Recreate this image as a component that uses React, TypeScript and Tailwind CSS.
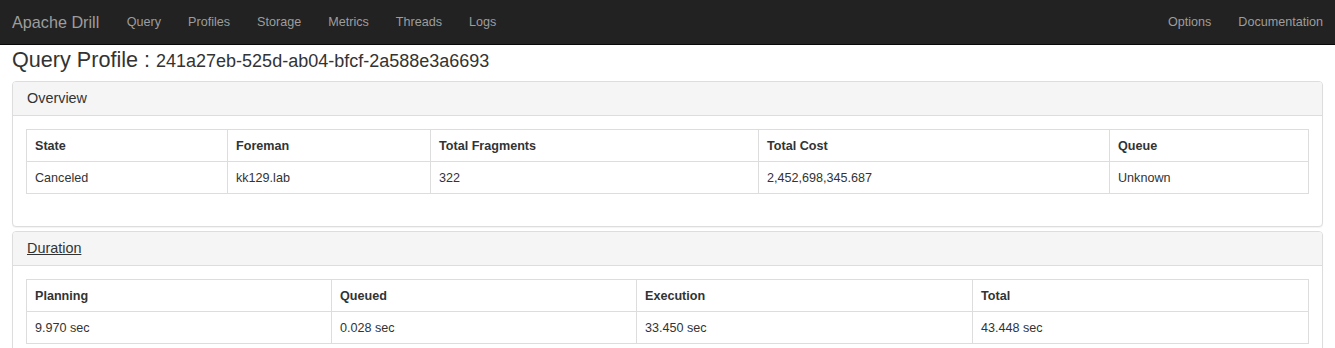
import React from "react";

const font = { fontFamily: '"Liberation Sans", Arial, Helvetica, sans-serif' };

function DataTable({ cols, head, row }: { cols: number[]; head: string[]; row: string[] }) {
  return (
    <table className="w-full table-fixed border-collapse border border-[#dddddd] text-[12.6px] text-[#333333]">
      <colgroup>
        {cols.map((w, i) => (
          <col key={i} style={{ width: w }} />
        ))}
      </colgroup>
      <thead>
        <tr>
          {head.map((h) => (
            <th key={h} className="border border-[#dddddd] px-[8px] pt-[7px] pb-[6px] text-left font-bold leading-[18px]">
              {h}
            </th>
          ))}
        </tr>
      </thead>
      <tbody>
        <tr>
          {row.map((c, i) => (
            <td key={i} className="border border-[#dddddd] px-[8px] pt-[7px] pb-[6px] leading-[18px]">
              {c}
            </td>
          ))}
        </tr>
      </tbody>
    </table>
  );
}

function Panel({ title, link, children }: { title: string; link?: boolean; children: React.ReactNode }) {
  return (
    <div className="mb-[4px] rounded-[4px] border border-[#dddddd] bg-white shadow-[0_1px_1px_rgba(0,0,0,0.05)]">
      <div className="flex h-[34px] items-center rounded-t-[3px] border-b border-[#dddddd] bg-[#f5f5f5] px-[14px] pt-[1px] text-[14.4px] text-[#333333]">
        {link ? <a className="underline">{title}</a> : <span>{title}</span>}
      </div>
      <div className="pt-[13px] pb-[32px] pl-[13px] pr-[14px]">{children}</div>
    </div>
  );
}

export default function App() {
  const left = ["Query", "Profiles", "Storage", "Metrics", "Threads", "Logs"];
  return (
    <div style={font} className="min-h-[348px] bg-white">
      <nav className="flex h-[45px] items-center border-b border-[#080808] bg-[#222222]">
        <span className="pl-[12px] pr-[14px] text-[16.2px] text-[#9d9d9d]">Apache Drill</span>
        <div className="flex">
          {left.map((l) => (
            <a key={l} className="px-[13.5px] text-[12.6px] text-[#9d9d9d]">
              {l}
            </a>
          ))}
        </div>
        <div className="ml-auto flex">
          <a className="px-[13.5px] text-[12.6px] text-[#9d9d9d]">Options</a>
          <a className="pl-[13.5px] pr-[12px] text-[12.6px] text-[#9d9d9d]">Documentation</a>
        </div>
      </nav>
      <div className="px-[12px]">
        <h3 className="mt-[3px] mb-[9px] h-[24px] overflow-visible text-[21.6px] leading-[24px] text-[#333333]">
          Query Profile : <span className="text-[18px] leading-none">241a27eb-525d-ab04-bfcf-2a588e3a6693</span>
        </h3>
        <Panel title="Overview">
          <DataTable
            cols={[201, 203, 328, 351, 199]}
            head={["State", "Foreman", "Total Fragments", "Total Cost", "Queue"]}
            row={["Canceled", "kk129.lab", "322", "2,452,698,345.687", "Unknown"]}
          />
        </Panel>
        <Panel title="Duration" link>
          <DataTable
            cols={[305, 305, 336, 336]}
            head={["Planning", "Queued", "Execution", "Total"]}
            row={["9.970 sec", "0.028 sec", "33.450 sec", "43.448 sec"]}
          />
        </Panel>
      </div>
    </div>
  );
}
